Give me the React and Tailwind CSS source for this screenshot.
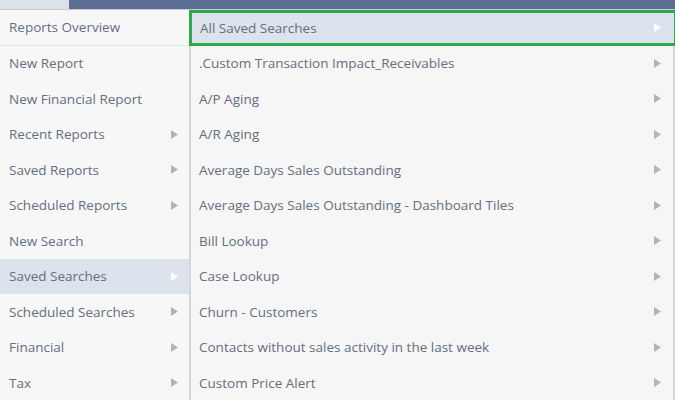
import React from "react";

const left = [
  ["Reports Overview", false],
  ["New Report", false],
  ["New Financial Report", false],
  ["Recent Reports", true],
  ["Saved Reports", true],
  ["Scheduled Reports", true],
  ["New Search", false],
  ["Saved Searches", true],
  ["Scheduled Searches", true],
  ["Financial", true],
  ["Tax", true],
];

const right = [
  "All Saved Searches",
  ".Custom Transaction Impact_Receivables",
  "A/P Aging",
  "A/R Aging",
  "Average Days Sales Outstanding",
  "Average Days Sales Outstanding - Dashboard Tiles",
  "Bill Lookup",
  "Case Lookup",
  "Churn - Customers",
  "Contacts without sales activity in the last week",
  "Custom Price Alert",
];

function Tri({ white }) {
  return (
    <svg width="7" height="9" viewBox="0 0 7 9" className="shrink-0">
      <path d="M0 0 L7 4.5 L0 9 Z" fill={white ? "#ffffff" : "#b3b3b3"} />
    </svg>
  );
}

export default function App() {
  return (
    <div
      className="w-[675px] h-[400px] overflow-hidden bg-[#f6f6f6] text-[#646f7f] flex flex-col"
      style={{ fontFamily: '"Open Sans", "Noto Sans", sans-serif' }}
    >
      <div className="h-[10px] flex shrink-0 border-b border-[#c9ccd2]">
        <div className="w-[69px] bg-[#dde2ea]" />
        <div className="flex-1 bg-[#5b6d92]" />
      </div>
      <div className="flex flex-1">
        <div className="w-[191px] shrink-0 flex flex-col border-r-2 border-[#d4d6da] bg-[#f7f7f7]">
          {left.map(([t, arrow], i) => (
            <div
              key={t}
              className={`h-[35.5px] shrink-0 flex items-center justify-between pl-[9px] pr-[11px] text-[13.5px] ${
                i === 7 ? "bg-[#dde3ec]" : ""
              } ${i === 0 ? "border-b border-[#e0e2e6]" : ""}`}
            >
              <span>{t}</span>
              {arrow && <Tri white={i === 7} />}
            </div>
          ))}
        </div>
        <div className="flex-1 flex flex-col border-r-2 border-[#d4d6da] bg-[#f6f6f6]">
          {right.map((t, i) => (
            <div
              key={t}
              className={`h-[35.5px] shrink-0 flex items-center justify-between pl-[8px] pr-[12px] text-[13.5px] ${
                i === 0 ? "bg-[#dde3ec] border-[3px] border-[#2ea84a] -ml-[2px] -mr-[4px] pl-[7px] pr-[13px]" : ""
              }`}
            >
              <span>{t}</span>
              <Tri white={i === 0} />
            </div>
          ))}
        </div>
      </div>
    </div>
  );
}
